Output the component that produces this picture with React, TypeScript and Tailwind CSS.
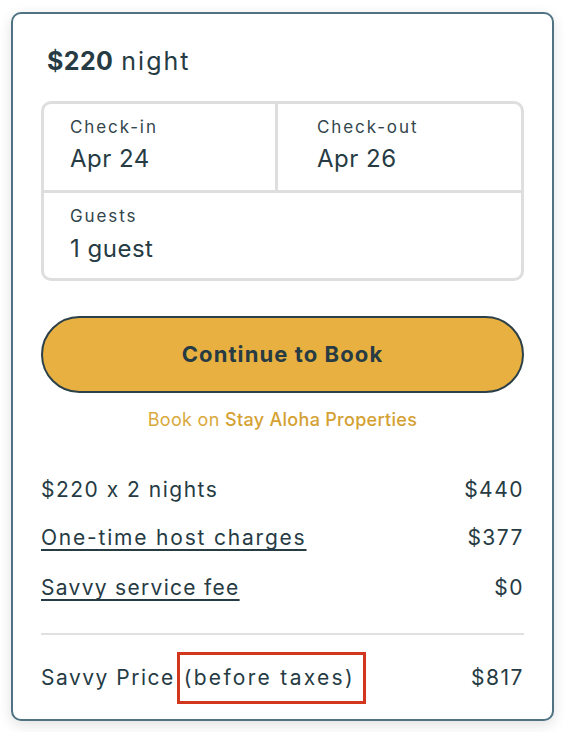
import React from "react";

const font = { fontFamily: "Inter, 'Noto Sans', sans-serif" };

export default function App() {
  return (
    <div className="min-h-[732px] w-[570px] bg-white" style={font}>
      <div className="pt-[12px] pl-[11px]">
        <div className="w-[543px] h-[709px] border-2 border-[#4f7383] rounded-[10px] bg-white shadow-[0_4px_14px_rgba(0,0,0,0.12)] px-[28px] pt-[32px] text-[#263b43]">
          {/* Title */}
          <div className="h-[32px] flex items-center pl-[6px] text-[25px]">
            <span className="font-bold tracking-[0.4px]">$220</span>
            <span className="ml-[8px] tracking-[2px]">night</span>
          </div>

          {/* Date box */}
          <div className="mt-[23px] border-[3px] border-[#dedede] rounded-[10px]">
            <div className="flex h-[89px] border-b-[3px] border-[#dedede]">
              <div className="w-[234px] border-r-[3px] border-[#dedede] pl-[26px] pt-[13px]">
                <div className="text-[17px] leading-[20px] tracking-[1.9px] text-[#33464d]">Check-in</div>
                <div className="mt-[6px] text-[24px] leading-[32px] tracking-[0.5px]">Apr 24</div>
              </div>
              <div className="flex-1 pl-[39px] pt-[13px]">
                <div className="text-[17px] leading-[20px] tracking-[1.9px] text-[#33464d]">Check-out</div>
                <div className="mt-[6px] text-[24px] leading-[32px] tracking-[0.5px]">Apr 26</div>
              </div>
            </div>
            <div className="h-[85px] pl-[26px] pt-[13px]">
              <div className="text-[17px] leading-[20px] tracking-[1.9px] text-[#33464d]">Guests</div>
              <div className="mt-[7px] text-[24px] leading-[32px] tracking-[0.5px]">1 guest</div>
            </div>
          </div>

          {/* Button */}
          <button className="mt-[35px] w-full h-[77px] rounded-full border-2 border-[#2b4049] bg-[#e8b040] flex items-center justify-center text-[22px] font-bold tracking-[1.1px] text-[#263b43]">
            Continue to Book
          </button>

          <div className="mt-[15px] h-[24px] leading-[24px] text-center text-[18px] tracking-[0.3px] text-[#d9a93b]">
            Book on <span className="font-medium text-[#d4a133]">Stay Aloha Properties</span>
          </div>

          {/* Price rows */}
          <div className="mt-[44px] h-[28px] flex items-center justify-between text-[21px] tracking-[1.5px]">
            <span>$220 x 2 nights</span>
            <span>$440</span>
          </div>
          <div className="mt-[20px] h-[28px] flex items-center justify-between text-[21px] tracking-[1.5px]">
            <span className="underline underline-offset-[4px] decoration-[1.5px] tracking-[1.8px]">One-time host charges</span>
            <span>$377</span>
          </div>
          <div className="mt-[22px] h-[28px] flex items-center justify-between text-[21px] tracking-[1.5px]">
            <span className="underline underline-offset-[4px] decoration-[1.5px] tracking-[1.3px]">Savvy service fee</span>
            <span>$0</span>
          </div>

          <div className="mt-[31px] h-[2px] bg-[#e0e0e0]" />

          <div className="mt-[29px] h-[28px] flex items-center justify-between text-[21px] tracking-[1.5px]">
            <span className="flex items-center">
              <span>Savvy Price</span>
              <span className="relative ml-[9px] flex items-center h-[28px] tracking-[2.3px]">
                (before taxes)
                <span className="absolute left-[-7px] right-[-11px] top-1/2 -translate-y-1/2 h-[52px] border-[3px] border-[#d2361c]" />
              </span>
            </span>
            <span>$817</span>
          </div>
        </div>
      </div>
    </div>
  );
}
